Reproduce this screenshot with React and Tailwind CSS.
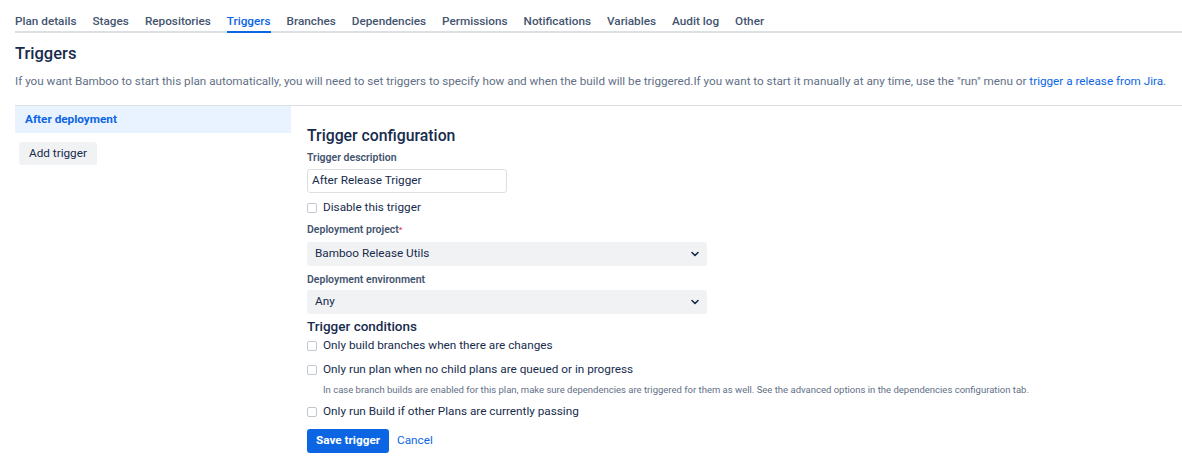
import React from "react";

const TABS = [
  "Plan details",
  "Stages",
  "Repositories",
  "Triggers",
  "Branches",
  "Dependencies",
  "Permissions",
  "Notifications",
  "Variables",
  "Audit log",
  "Other",
];

const Check = ({ label, help }) => (
  <div className="flex flex-col">
    <label className="flex items-center gap-[6px] text-[11.75px] text-[#172b4d] h-[20px]">
      <span className="w-[10px] h-[10px] rounded-[2px] border border-[#c1c7d0] bg-white"></span>
      {label}
    </label>
    {help && (
      <div className="pl-[16px] mt-[4px] text-[9.5px] leading-[12px] text-[#626f86]">{help}</div>
    )}
  </div>
);

const Chevron = () => (
  <svg width="8" height="6" viewBox="0 0 8 6" className="text-[#172b4d]">
    <path d="M1 1.5 L4 4.5 L7 1.5" fill="none" stroke="currentColor" strokeWidth="1.6" strokeLinecap="round" strokeLinejoin="round" />
  </svg>
);

const Select = ({ value }) => (
  <div className="w-[400px] h-[24px] rounded-[3px] bg-[#f1f2f4] flex items-center justify-between pl-[8px] pr-[8px] text-[11.75px] text-[#172b4d]">
    <span>{value}</span>
    <Chevron />
  </div>
);

const Label = ({ children, required }) => (
  <div className="text-[10.5px] font-semibold text-[#44546f] leading-[12px]">
    {children}
    {required && <span className="text-[#e2483d] align-top text-[8px]">*</span>}
  </div>
);

export default function App() {
  return (
    <div className="w-[1182px] h-[467px] bg-white font-['Roboto',sans-serif] text-[#172b4d] overflow-hidden">
      <div className="pl-[15px]">
        {/* tabs */}
        <div className="flex gap-[16px] border-b-2 border-[#dcdfe4] h-[33px] items-end text-[11.75px] leading-[14px] text-[#44546f] font-medium">
          {TABS.map((t) => (
            <div
              key={t}
              className={`pb-[3px] -mb-[2px] border-b-2 ${
                t === "Triggers" ? "border-[#0c66e4] text-[#0c66e4]" : "border-transparent"
              }`}
            >
              {t}
            </div>
          ))}
        </div>

        <h1 className="text-[16.5px] font-medium text-[#172b4d] mt-[10px] leading-[22px]">Triggers</h1>
        <p className="text-[11.7px] text-[#626f86] mt-[9px] leading-[14px] whitespace-nowrap">
          If you want Bamboo to start this plan automatically, you will need to set triggers to specify how and when the build will be triggered.If you want to start it manually at any time, use the "run" menu or{" "}
          <span className="text-[#0c66e4]">trigger a release from Jira</span>.
        </p>

        <div className="mt-[17px] border-t border-[#dcdfe4] flex">
          {/* sidebar */}
          <div className="w-[276px] shrink-0">
            <div className="h-[27px] bg-[#e9f2ff] flex items-center pl-[10px] text-[11.75px] font-bold text-[#0c66e4]">
              After deployment
            </div>
            <button className="ml-[4px] mt-[9px] h-[23px] px-[10px] rounded-[3px] bg-[#f1f2f4] text-[11.75px] text-[#172b4d]">
              Add trigger
            </button>
          </div>

          {/* form */}
          <div className="pl-[16px] pt-[20px] flex flex-col">
            <h2 className="text-[15.8px] font-medium leading-[20px]">Trigger configuration</h2>
            <div className="mt-[6px]">
              <Label>Trigger description</Label>
            </div>
            <div className="mt-[5px] w-[200px] h-[24px] border border-[#dcdfe4] rounded-[3px] flex items-center pl-[4px] text-[11.75px]">
              After Release Trigger
            </div>
            <div className="mt-[5px]">
              <Check label="Disable this trigger" />
            </div>
            <div className="mt-[6px]">
              <Label required>Deployment project</Label>
            </div>
            <div className="mt-[6px]">
              <Select value="Bamboo Release Utils" />
            </div>
            <div className="mt-[8px]">
              <Label>Deployment environment</Label>
            </div>
            <div className="mt-[4px]">
              <Select value="Any" />
            </div>
            <h3 className="mt-[3px] text-[13.5px] font-medium leading-[18px]">Trigger conditions</h3>
            <div className="mt-[1px] flex flex-col gap-[4px]">
              <Check label="Only build branches when there are changes" />
              <Check
                label="Only run plan when no child plans are queued or in progress"
                help="In case branch builds are enabled for this plan, make sure dependencies are triggered for them as well. See the advanced options in the dependencies configuration tab."
              />
              <div className="mt-[2px]">
                <Check label="Only run Build if other Plans are currently passing" />
              </div>
            </div>
            <div className="mt-[7px] flex items-center gap-[8px]">
              <button className="h-[24px] px-[9px] rounded-[3px] bg-[#0c66e4] text-white text-[11.75px] font-bold">
                Save trigger
              </button>
              <span className="text-[11.75px] text-[#0c66e4]">Cancel</span>
            </div>
          </div>
        </div>
      </div>
    </div>
  );
}
